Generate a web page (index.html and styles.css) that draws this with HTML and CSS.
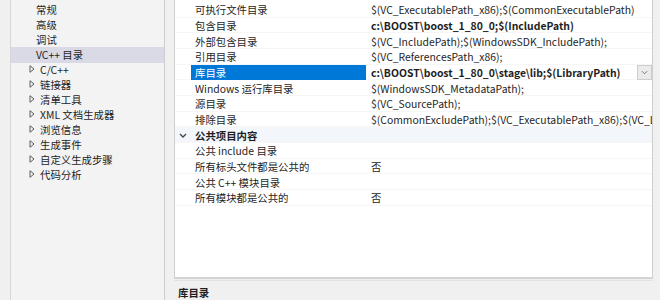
FILE: index.html
```html
<!DOCTYPE html>
<html lang="zh-CN">
<head>
<meta charset="utf-8">
<title>属性页</title>
<link rel="stylesheet" href="styles.css">
</head>
<body>
<div class="dlg">
  <div class="tree">
    <div class="trow child">常规</div>
    <div class="trow child">高级</div>
    <div class="trow child">调试</div>
    <div class="trow child sel">VC++ 目录</div>
    <div class="trow parent"><svg class="tri" viewBox="0 0 6 8"><path d="M1 0.7 L5 4 L1 7.3 Z"/></svg><span>C/C++</span></div>
    <div class="trow parent"><svg class="tri" viewBox="0 0 6 8"><path d="M1 0.7 L5 4 L1 7.3 Z"/></svg><span>链接器</span></div>
    <div class="trow parent"><svg class="tri" viewBox="0 0 6 8"><path d="M1 0.7 L5 4 L1 7.3 Z"/></svg><span>清单工具</span></div>
    <div class="trow parent"><svg class="tri" viewBox="0 0 6 8"><path d="M1 0.7 L5 4 L1 7.3 Z"/></svg><span>XML 文档生成器</span></div>
    <div class="trow parent"><svg class="tri" viewBox="0 0 6 8"><path d="M1 0.7 L5 4 L1 7.3 Z"/></svg><span>浏览信息</span></div>
    <div class="trow parent"><svg class="tri" viewBox="0 0 6 8"><path d="M1 0.7 L5 4 L1 7.3 Z"/></svg><span>生成事件</span></div>
    <div class="trow parent"><svg class="tri" viewBox="0 0 6 8"><path d="M1 0.7 L5 4 L1 7.3 Z"/></svg><span>自定义生成步骤</span></div>
    <div class="trow parent"><svg class="tri" viewBox="0 0 6 8"><path d="M1 0.7 L5 4 L1 7.3 Z"/></svg><span>代码分析</span></div>
  </div>
  <div class="right">
    <div class="grid">
      <div class="grow"><span class="gut"></span><span class="name">可执行文件目录</span><span class="val">$(VC_ExecutablePath_x86);$(CommonExecutablePath)</span></div>
      <div class="grow"><span class="gut"></span><span class="name">包含目录</span><span class="val bold">c:\BOOST\boost_1_80_0;$(IncludePath)</span></div>
      <div class="grow"><span class="gut"></span><span class="name">外部包含目录</span><span class="val">$(VC_IncludePath);$(WindowsSDK_IncludePath);</span></div>
      <div class="grow"><span class="gut"></span><span class="name">引用目录</span><span class="val">$(VC_ReferencesPath_x86);</span></div>
      <div class="grow selrow"><span class="gut"></span><span class="name">库目录</span><span class="val bold">c:\BOOST\boost_1_80_0\stage\lib;$(LibraryPath)</span><span class="dd"><svg viewBox="0 0 8 5"><path d="M1 1 L4 4 L7 1"/></svg></span></div>
      <div class="grow"><span class="gut"></span><span class="name">Windows 运行库目录</span><span class="val">$(WindowsSDK_MetadataPath);</span></div>
      <div class="grow"><span class="gut"></span><span class="name">源目录</span><span class="val">$(VC_SourcePath);</span></div>
      <div class="grow"><span class="gut"></span><span class="name">排除目录</span><span class="val">$(CommonExcludePath);$(VC_ExecutablePath_x86);$(VC_L</span></div>
      <div class="grow group"><span class="gut"><svg class="chev" viewBox="0 0 8 5"><path d="M1 1 L4 4 L7 1"/></svg></span><span class="name">公共项目内容</span><span class="val"></span></div>
      <div class="grow"><span class="gut"></span><span class="name">公共 include 目录</span><span class="val"></span></div>
      <div class="grow"><span class="gut"></span><span class="name">所有标头文件都是公共的</span><span class="val">否</span></div>
      <div class="grow"><span class="gut"></span><span class="name">公共 C++ 模块目录</span><span class="val"></span></div>
      <div class="grow"><span class="gut"></span><span class="name">所有模块都是公共的</span><span class="val">否</span></div>
    </div>
    <div class="desc">库目录</div>
  </div>
</div>
</body>
</html>
```

FILE: styles.css
```css
html, body {
  margin: 0;
  padding: 0;
  background: #f0f0f0;
  font-family: "Noto Sans CJK SC", "Noto Sans", sans-serif;
  font-size: 10.4px;
  color: #1e1e1e;
}
.dlg {
  display: flex;
  height: 300px;
  overflow: hidden;
  padding-left: 10px;
}
.tree {
  width: 155px;
  flex: none;
  background: #f3f3f3;
  border-left: 1px solid #d6d6d6;
  border-right: 1px solid #cfcfcf;
  padding-top: 1.5px;
  box-sizing: border-box;
}
.trow {
  height: 15px;
  display: flex;
  align-items: center;
  white-space: nowrap;
}
.trow.child { padding-left: 25px; }
.trow.parent { padding-left: 18px; }
.trow.sel {
  background: #d9dae6;
  height: 16px;
  margin-bottom: -1px;
}
.tri {
  width: 6px;
  height: 8px;
  margin-right: 5px;
  fill: none;
  stroke: #5c5c5c;
  stroke-width: 1;
}
.right {
  margin-left: 9px;
  width: 479px;
  flex: none;
  display: flex;
  flex-direction: column;
}
.grid {
  height: 288px;
  box-sizing: border-box;
  background: #fff;
  border-left: 1px solid #cfcfcf;
  border-right: 1px solid #cfcfcf;
  border-bottom: 2px solid #d4d4d4;
  padding-top: 2px;
  overflow: hidden;
}
.grow {
  height: 15.67px;
  display: flex;
  align-items: center;
  white-space: nowrap;
  box-shadow: inset 0 -1px 0 #f6f6f6;
}
.gut {
  width: 16px;
  flex: none;
  height: 100%;
  display: flex;
  align-items: center;
  justify-content: center;
}
.name {
  width: 175px;
  flex: none;
  padding-left: 4px;
  box-sizing: border-box;
  height: 100%;
  display: flex;
  align-items: center;
}
.val {
  flex: 1;
  padding-left: 5px;
  overflow: hidden;
  min-width: 0;
}
.bold { font-weight: bold; }
.selrow .name {
  background: #0078d7;
  color: #fff;
}
.dd {
  width: 15px;
  height: 15px;
  flex: none;
  margin-right: 0;
  background: #ebebeb;
  border: 1px solid #cdcdcd;
  box-sizing: border-box;
  display: flex;
  align-items: center;
  justify-content: center;
}
.dd svg {
  width: 7px;
  height: 5px;
  fill: none;
  stroke: #6a6a6a;
  stroke-width: 1;
}
.group {
  background: #f3f6fa;
  font-weight: bold;
}
.chev {
  width: 8px;
  height: 5px;
  fill: none;
  stroke: #444;
  stroke-width: 1.3;
}
.desc {
  margin-top: 1px;
  border-top: 1px solid #e2e2e2;
  padding: 4px 0 0 4px;
  font-weight: bold;
  background: #f0f0f0;
}
```
